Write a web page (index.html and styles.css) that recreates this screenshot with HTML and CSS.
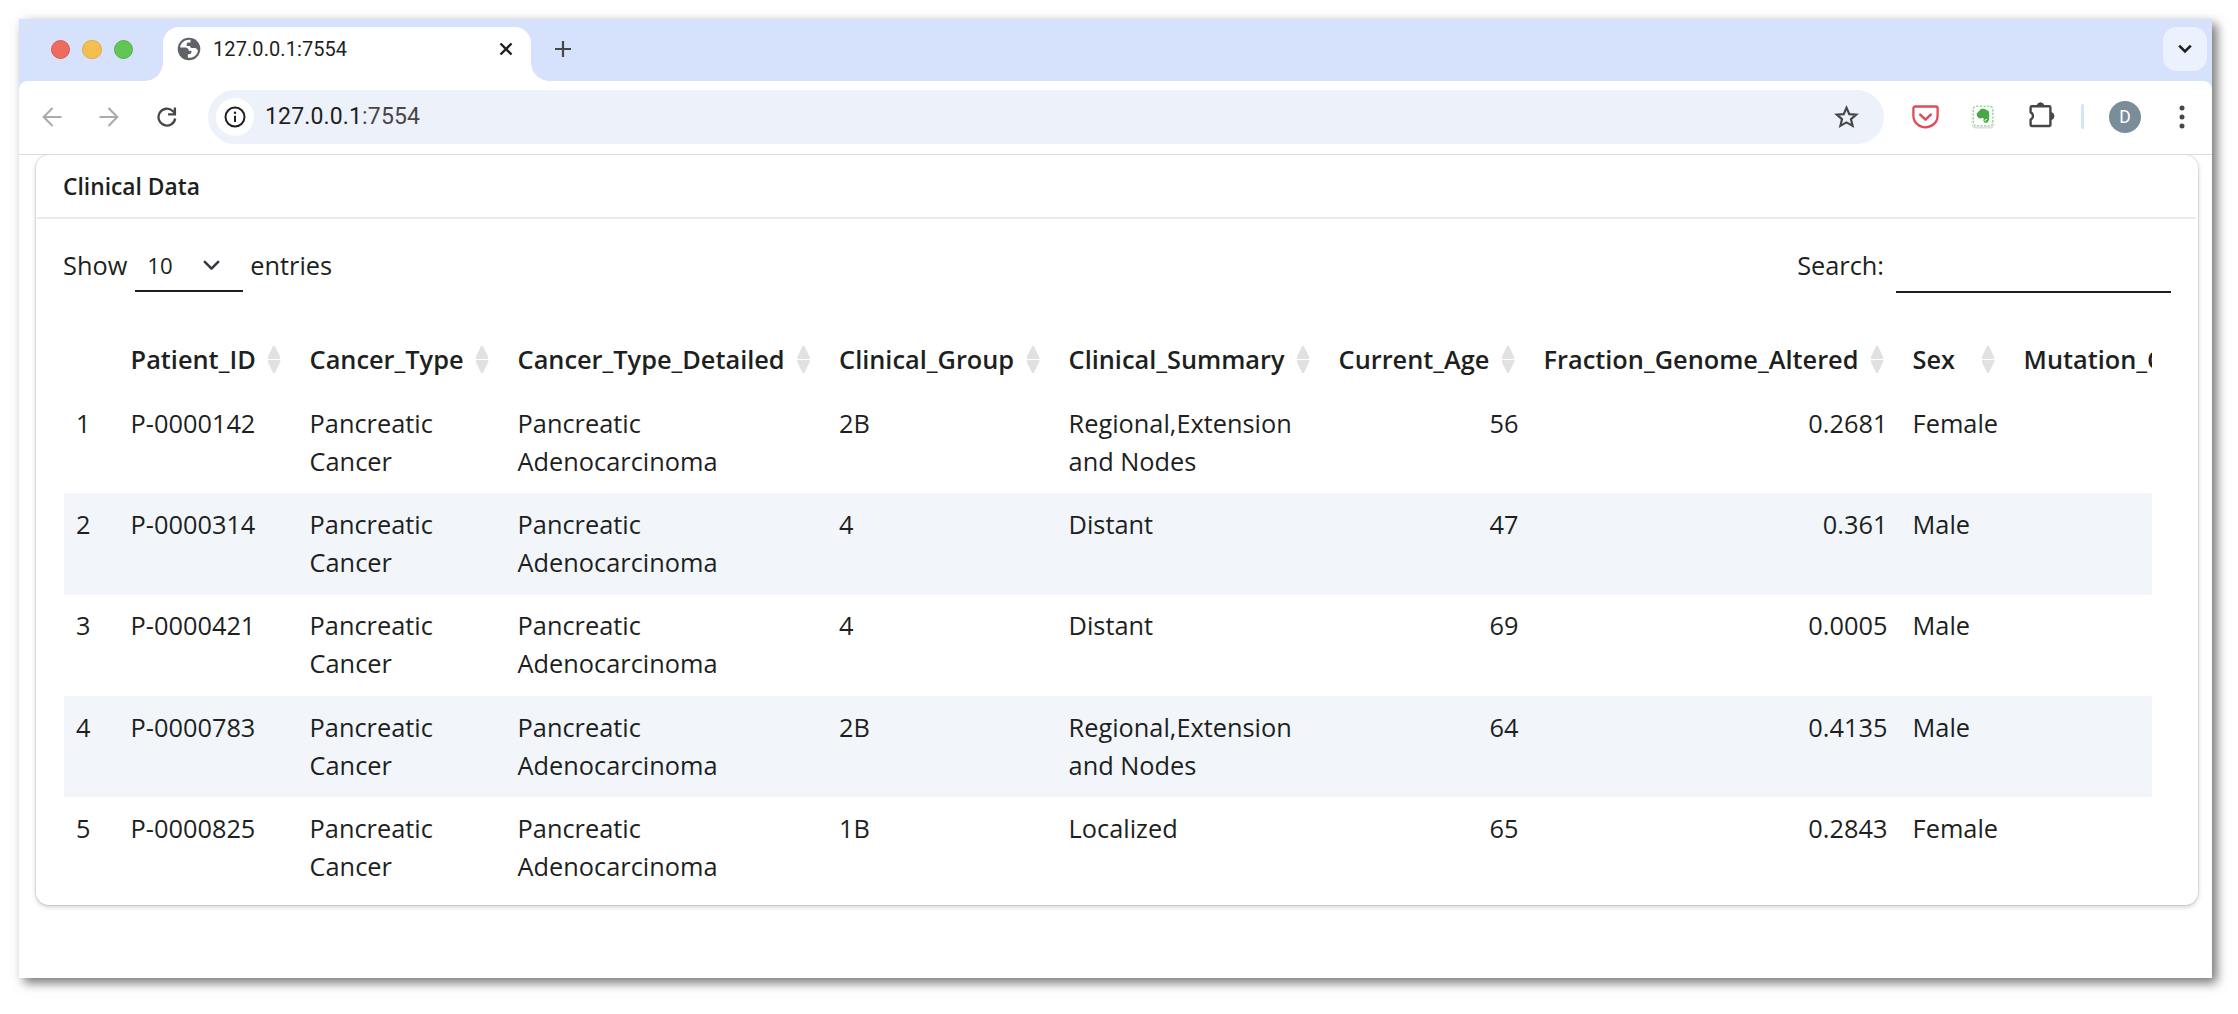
FILE: index.html
```html
<!DOCTYPE html>
<html lang="en">
<head>
<meta charset="utf-8">
<title>Clinical Data</title>
<link rel="stylesheet" href="styles.css">
</head>
<body>
<div class="window">
  <header class="tabstrip">
    <div class="lights"><i class="light red"></i><i class="light amber"></i><i class="light green"></i></div>
    <div class="tab">
      <svg class="globe" width="24" height="24" viewBox="0 0 24 24"><circle cx="12" cy="12" r="11.300" fill="#5f6368"/><path d="M13.500 2.800C8 2.200 3.800 5.700 3 10.400h5.400c2 0 3.400 1.300 3.400 3.400h2.600v1.500c0 1.300-1 1.900-2.300 1.900h-1.200v3.600c5.300.6 9.300-2.800 10.100-7.300-.6-.2-.6-1-1.200-1.600-.5-.6-1.200-.8-2.100-.8h-2.200c-1.500 0-2.400-.9-2.400-2.200H9.700V7.100c0-1 .7-1.500 1.600-1.500h2.200z" fill="#fff"/></svg>
      <span class="tab-title">127.0.0.1:7554</span>
      <svg class="close" width="14" height="14" viewBox="0 0 14 14"><path d="M1.500 1.500l11 11M12.500 1.500l-11 11" stroke="#1f1f1f" stroke-width="2.400"/></svg>
    </div>
    <svg class="newtab" width="18" height="18" viewBox="0 0 18 18"><path d="M9 1v16M1 9h16" stroke="#474747" stroke-width="2.200"/></svg>
    <div class="tabsearch"><svg width="14" height="10" viewBox="0 0 14 10"><path d="M1.200 1.700L7 7.500l5.800-5.800" fill="none" stroke="#1f1f1f" stroke-width="2.600"/></svg></div>
  </header>
  <div class="toolbar">
    <svg class="back" width="20" height="20" viewBox="0 0 20 20"><path d="M19.500 10H2M10.500 1L1.700 10l8.800 9" fill="none" stroke="#ababab" stroke-width="2.100"/></svg>
    <svg class="forward" width="20" height="20" viewBox="0 0 20 20"><path d="M.5 10H18M9.500 1l8.800 9-8.800 9" fill="none" stroke="#ababab" stroke-width="2.100"/></svg>
    <svg class="reload" width="20" height="20" viewBox="0 0 20 20"><path d="M18.200 11.500A8.400 8.400 0 1 1 15.700 4L18 6.300" fill="none" stroke="#474747" stroke-width="2.300"/><path d="M17.900.5v6.800h-6.800" fill="none" stroke="#474747" stroke-width="2.300"/></svg>
    <div class="omnibox">
      <div class="info"><svg width="22" height="22" viewBox="0 0 22 22"><circle cx="11" cy="11" r="9.500" fill="none" stroke="#1f1f1f" stroke-width="2"/><path d="M11 9.700v6.300" stroke="#1f1f1f" stroke-width="2"/><circle cx="11" cy="6.700" r="1.200" fill="#1f1f1f"/></svg></div>
      <span class="url">127.0.0.1<span class="port">:7554</span></span>
      <svg class="star" width="25" height="24" viewBox="0 0 25 24"><path d="M12.500 2.800l2.800 6.300 6.900.6-5.200 4.500 1.600 6.700-6.100-3.500-6.100 3.500 1.600-6.700-5.200-4.500 6.900-.6z" fill="none" stroke="#474747" stroke-width="2.200"/></svg>
    </div>
    <svg class="pocket" width="27" height="24" viewBox="0 0 27 24"><path d="M3.200 1.500h20.600a1.800 1.800 0 0 1 1.800 1.800v7.400a12.100 11.600 0 0 1-24.200 0V3.300a1.800 1.800 0 0 1 1.800-1.800z" fill="none" stroke="#dd4c57" stroke-width="2.300"/><path d="M8.200 9.600l5.300 5 5.300-5" fill="none" stroke="#dd4c57" stroke-width="2.500" stroke-linecap="round" stroke-linejoin="round"/></svg>
    <svg class="clipper" width="24" height="24" viewBox="0 0 24 24"><rect x=".5" y="1" width="23" height="22.500" rx="4.500" fill="#dedede"/><rect x=".5" y=".3" width="23" height="21.200" rx="4.500" fill="#f8f9f8"/><rect x="2.300" y="1.200" width="19.400" height="19.600" rx="3" fill="#fff" stroke="#7fcf86" stroke-width="1.100" stroke-dasharray="2.200 1.400"/><path d="M5.700 8.500L10 4c2.500-.6 4.300 0 5.200 1 2 .2 2.700 1 2.900 3.200.3 4 0 8.300-1.700 9.300-1.600.8-4 .2-4-2 0-.7.200-1.300.6-1.700-.6-.1-1-.5-1.200-1-1.300.9-3.300.8-4.400 0C6.200 11.800 5.700 10.300 5.700 8.500z" fill="#48a845"/><path d="M16 14.600c-2-.6-2.600 1.500-1.100 1.700" fill="none" stroke="#fff" stroke-width="1"/></svg>
    <svg class="puzzle" width="27" height="26" viewBox="0 0 27 26"><path d="M3.800 4.200h17.400a1.200 1.200 0 0 1 1.200 1.200v17.400a1.200 1.200 0 0 1-1.200 1.200H3.800a1.200 1.200 0 0 1-1.200-1.200v-5.200a3.900 3.900 0 0 0 0-7.200V5.400a1.200 1.200 0 0 1 1.200-1.200z" fill="none" stroke="#474747" stroke-width="2.400" stroke-linejoin="round"/><path d="M9.300 4a3.200 3.200 0 0 1 6.400 0zM22.500 10.600a3.500 3.500 0 0 1 0 7z" fill="#474747" stroke="#474747"/></svg>
    <i class="divider"></i>
    <div class="avatar">D</div>
    <svg class="menu" width="6" height="24" viewBox="0 0 6 24"><g fill="#474747"><circle cx="3" cy="3" r="2.500"/><circle cx="3" cy="12" r="2.500"/><circle cx="3" cy="21" r="2.500"/></g></svg>
  </div>
  <main class="page">
    <section class="card">
      <h1 class="card-title">Clinical Data</h1>
      <div class="controls">
        <span>Show</span>
        <span class="select"><span>10</span><svg width="17" height="11" viewBox="0 0 17 11"><path d="M1.800 1.800l6.700 6.900 6.700-6.900" fill="none" stroke="#343a40" stroke-width="2.500" stroke-linecap="round" stroke-linejoin="round"/></svg></span>
        <span>entries</span>
        <span class="search-label">Search:</span><input class="search" type="text" aria-label="Search">
      </div>
      <div class="scroll">
        <table class="grid">
          <colgroup><col class="c0"><col class="c1"><col class="c2"><col class="c3"><col class="c4"><col class="c5"><col class="c6"><col class="c7"><col class="c8"><col class="c9"></colgroup>
          <thead><tr><th></th><th>Patient_ID<i class="sort"></i></th><th>Cancer_Type<i class="sort"></i></th><th>Cancer_Type_Detailed<i class="sort"></i></th><th>Clinical_Group<i class="sort"></i></th><th>Clinical_Summary<i class="sort"></i></th><th>Current_Age<i class="sort"></i></th><th>Fraction_Genome_Altered<i class="sort"></i></th><th>Sex<i class="sort"></i></th><th>Mutation_Count</th></tr></thead>
          <tbody>
            <tr><td>1</td><td>P-0000142</td><td>Pancreatic<br>Cancer</td><td>Pancreatic<br>Adenocarcinoma</td><td>2B</td><td>Regional,Extension<br>and Nodes</td><td class="num">56</td><td class="num">0.2681</td><td>Female</td><td></td></tr>
            <tr><td>2</td><td>P-0000314</td><td>Pancreatic<br>Cancer</td><td>Pancreatic<br>Adenocarcinoma</td><td>4</td><td>Distant</td><td class="num">47</td><td class="num">0.361</td><td>Male</td><td></td></tr>
            <tr><td>3</td><td>P-0000421</td><td>Pancreatic<br>Cancer</td><td>Pancreatic<br>Adenocarcinoma</td><td>4</td><td>Distant</td><td class="num">69</td><td class="num">0.0005</td><td>Male</td><td></td></tr>
            <tr><td>4</td><td>P-0000783</td><td>Pancreatic<br>Cancer</td><td>Pancreatic<br>Adenocarcinoma</td><td>2B</td><td>Regional,Extension<br>and Nodes</td><td class="num">64</td><td class="num">0.4135</td><td>Male</td><td></td></tr>
            <tr><td>5</td><td>P-0000825</td><td>Pancreatic<br>Cancer</td><td>Pancreatic<br>Adenocarcinoma</td><td>1B</td><td>Localized</td><td class="num">65</td><td class="num">0.2843</td><td>Female</td><td></td></tr>
          </tbody>
        </table>
      </div>
    </section>
  </main>
</div>
</body>
</html>
```

FILE: styles.css
```css
* { box-sizing: border-box; }
html, body { margin: 0; height: 100%; background: #fff; overflow: hidden; }
body { padding: 19px 26px 36px 19px; font-family: "Open Sans", sans-serif; color: #1d1f21; }
svg { display: block; flex: none; }

.window { width: 2193px; height: 959px; background: #fff; display: flex; flex-direction: column; box-shadow: 5px 5px 10px rgba(0,0,0,.52), 0 0 14px rgba(0,0,0,.04); }

/* tab strip */
.tabstrip { height: 62px; flex: none; background: #d6e1fc; display: flex; align-items: flex-start; padding-top: 8px; position: relative; }
.tabstrip::after { content: ""; position: absolute; left: 0; bottom: -8px; width: 100%; height: 8px; background: radial-gradient(circle at 8px 8px, #fff 7.500px, #d6e1fc 8px) 0 0 / 8px 8px no-repeat, radial-gradient(circle at 0 8px, #fff 7.500px, #d6e1fc 8px) 100% 0 / 8px 8px no-repeat; }
.lights { display: flex; gap: 12.500px; margin: 13px 0 0 31.500px; width: 112.500px; }
.light { width: 19.300px; height: 19.300px; border-radius: 50%; border: 1px solid; }
.red { background: #ed6b5f; border-color: #dc5c50; }
.amber { background: #f5bf4f; border-color: #dfab3f; }
.green { background: #61c654; border-color: #53b146; }
.tab { position: relative; width: 368px; height: 54px; background: #fff; border-radius: 16px 16px 0 0; display: flex; align-items: center; padding: 0 18px 10px 14px; }
.tab::before, .tab::after { content: ""; position: absolute; bottom: 0; width: 18px; height: 18px; }
.tab::before { left: -18px; background: radial-gradient(circle at 0 0, transparent 17.500px, #fff 18px); }
.tab::after { right: -18px; background: radial-gradient(circle at 100% 0, transparent 17.500px, #fff 18px); }
.tab-title { margin-left: 12px; font: 400 20px/24px Roboto, sans-serif; letter-spacing: .08px; color: #1f1f1f; }
.close { margin-left: auto; }
.newtab { margin: 13px 0 0 23px; }
.tabsearch { width: 44px; height: 44px; margin-left: auto; margin-right: 5px; border-radius: 14px; background: #ecf2fd; display: flex; align-items: center; justify-content: center; }

/* toolbar */
.toolbar { height: 74px; flex: none; border-bottom: 1px solid #dcdcdc; display: flex; align-items: center; padding: 0 20px 2px 23px; }
.forward { margin-left: 37px; }
.reload { margin-left: 38px; }
.omnibox { width: 1676px; height: 54px; margin-left: 31px; border-radius: 27px; background: #edf2fa; display: flex; align-items: center; padding: 0 25.500px 0 8px; }
.info { width: 38px; height: 38px; border-radius: 50%; background: #fff; display: flex; align-items: center; justify-content: center; }
.url { margin-left: 11px; font: 400 23px/28px Roboto, sans-serif; letter-spacing: .15px; color: #1f1f1f; }
.port { color: #474747; }
.star { margin-left: auto; }
.pocket { margin-left: 27.500px; }
.clipper { margin-left: 32px; }
.puzzle { margin-left: 33px; margin-top: -3px; }
.divider { width: 3px; height: 25px; margin-left: 26px; border-radius: 2px; background: #d6e3fc; }
.avatar { width: 32px; height: 32px; margin-left: 25.500px; border-radius: 50%; background: #7a8e9a; color: #fff; font: 400 17.500px/33px Roboto, sans-serif; text-align: center; }
.menu { margin-left: 38px; }

/* page */
.page { flex: 1; overflow: hidden; padding: 0 14px 0 17px; }
.card { height: 750px; border-radius: 13px; background: #fff; box-shadow: 0 0 0 1px rgba(0,0,0,.07), 0 2px 5px rgba(0,0,0,.2); }
.card-title { margin: 0 2px 0 1px; height: 64px; border-bottom: 2px solid #ebebeb; padding: 0 26px; font-size: 22.800px; line-height: 64px; font-weight: 600; }
.controls { display: flex; align-items: flex-start; height: 110px; padding: 28px 27px 0 27px; font-size: 25.330px; line-height: 37px; }
.select { display: flex; align-items: center; width: 108px; height: 45px; margin: 0 7px 0 8px; padding: 0 23px 6px 12px; justify-content: space-between; border-bottom: 2px solid #1d1f21; font-size: 22.200px; }
.search-label { margin-left: auto; margin-right: 12px; }
.search { width: 275px; height: 46px; border: 0; border-bottom: 2px solid #1d1f21; background: transparent; padding: 0; outline: 0; }
.scroll { margin-left: 27.500px; width: 2088.500px; overflow: hidden; }
.grid { width: 2207.500px; table-layout: fixed; border-collapse: collapse; font-size: 25.330px; line-height: 38px; }
.grid th { position: relative; height: 63px; padding: 0 12.600px 3px; text-align: left; font-weight: 600; white-space: nowrap; }
.grid td { height: 101.330px; padding: 11.600px 12.600px 12.600px; vertical-align: top; }
.grid .num { text-align: right; }
.grid tbody tr:nth-child(even) { background: #f2f6fb; }
.c0 { width: 54.500px; } .c1 { width: 179px; } .c2 { width: 208px; } .c3 { width: 321.500px; } .c4 { width: 229.500px; }
.c5 { width: 270px; } .c6 { width: 205px; } .c7 { width: 369px; } .c8 { width: 111px; } .c9 { width: 260px; }
.sort { position: absolute; right: 16.500px; top: 17px; width: 13px; height: 27px; }
.sort::before, .sort::after { content: ""; position: absolute; left: 0; width: 13px; height: 13px; background: #e1e1e1; }
.sort::before { top: 0; clip-path: polygon(43% 0, 57% 0, 100% 90%, 95% 100%, 5% 100%, 0 90%); }
.sort::after { bottom: 0; clip-path: polygon(5% 0, 95% 0, 100% 10%, 57% 100%, 43% 100%, 0 10%); }
```
